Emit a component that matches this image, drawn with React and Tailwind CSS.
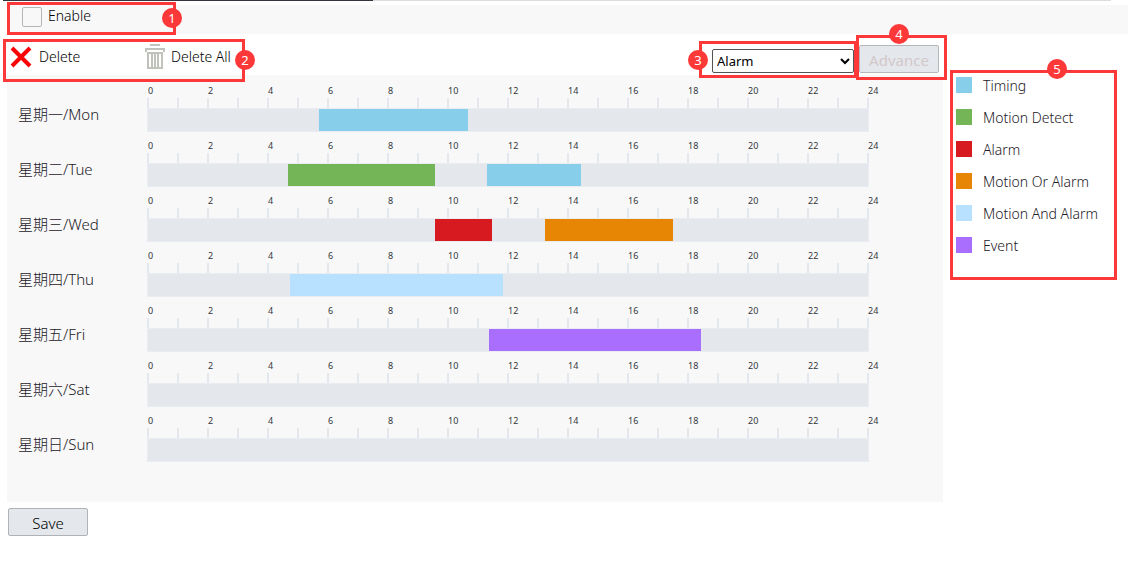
import React from "react";

const KINDS = [
  { name: "Timing", color: "bg-[#87ceeb]" },
  { name: "Motion Detect", color: "bg-[#73b557]" },
  { name: "Alarm", color: "bg-[#d71920]" },
  { name: "Motion Or Alarm", color: "bg-[#e68604]" },
  { name: "Motion And Alarm", color: "bg-[#b8e1ff]" },
  { name: "Event", color: "bg-[#aa6eff]" },
];

// Periods are [kind index, start minute, end minute].
const DAYS = [
  { label: "星期一/Mon", periods: [[0, 342, 640]] },
  { label: "星期二/Tue", periods: [[1, 280, 574], [0, 678, 866]] },
  { label: "星期三/Wed", periods: [[2, 574, 688], [3, 794, 1050]] },
  { label: "星期四/Thu", periods: [[4, 284, 710]] },
  { label: "星期五/Fri", periods: [[5, 682, 1106]] },
  { label: "星期六/Sat", periods: [] },
  { label: "星期日/Sun", periods: [] },
];

const DAY_MINUTES = 1440;
const HOURS = Array.from({ length: 25 }, (_, h) => h);
const EVEN_HOURS = HOURS.filter((h) => h % 2 === 0);

function Callout({ number, box, badge }) {
  return (
    <div className={`pointer-events-none absolute z-10 border-3 border-[#fd3838] ${box}`}>
      <span
        className={`absolute flex size-5 items-center justify-center rounded-full bg-[#fd3838] text-[13px] leading-none text-white ${badge}`}
      >
        {number}
      </span>
    </div>
  );
}

function CrossIcon() {
  return (
    <svg width="22" height="22" viewBox="0 0 22 22" aria-hidden="true">
      <path d="M2 2 20 20M20 2 2 20" stroke="#fa0505" strokeWidth="4" fill="none" />
    </svg>
  );
}

function TrashIcon() {
  return (
    <svg width="20" height="25" viewBox="0 0 20 25" fill="#c0c3bc" aria-hidden="true">
      <path d="M5 0h10v2H5zM0 4h20v4h-2V6H2v2H0z" />
      <path fillRule="evenodd" d="M2 8h16v17H2zM4 10v13h2V10zM8 10v13h1V10zM11 10v13h1V10zM14 10v13h2V10z" />
    </svg>
  );
}

function DayRow({ label, periods }) {
  return (
    <div className="flex h-[55px]">
      <div className="w-[129px] shrink-0 pt-6 text-[15px] leading-[30px] font-light text-[#1c2026]">{label}</div>
      <div className="min-w-0 flex-1">
        <div className="flex h-[23px] justify-between pt-2 pl-px text-[9px] leading-4 text-[#33373c]">
          {EVEN_HOURS.map((h) => (
            <span key={h} className="w-px whitespace-nowrap">
              {h}
            </span>
          ))}
        </div>
        <div className="flex h-[10px] justify-between">
          {HOURS.map((h) => (
            <span key={h} className="w-[2px] bg-[#e4e7ec]" />
          ))}
        </div>
        <div className="relative h-6 border border-[#e9ecf0] bg-[#e4e7ec]">
          {periods.map(([kind, start, end]) => (
            <div
              key={start}
              className={`absolute inset-y-0 ${KINDS[kind].color}`}
              style={{
                left: `${(start / DAY_MINUTES) * 100}%`,
                width: `${((end - start) / DAY_MINUTES) * 100}%`,
              }}
            />
          ))}
        </div>
      </div>
    </div>
  );
}

export default function App() {
  return (
    <div className="bg-white font-['Noto_Sans','Noto_Sans_CJK_SC',sans-serif] text-[13px] text-[#1c2026]">
      <div className="mr-6 ml-[3px] flex h-px">
        <div className="w-[370px] bg-[#34343e]" />
        <div className="flex-1 bg-[#dcdcdc]" />
      </div>

      <div className="px-[7px] pt-1">
        <div className="relative flex h-[29px] items-start bg-[#f8f8f8] pt-[2px] pl-[15px]">
          <input
            id="enable"
            type="checkbox"
            className="size-5 appearance-none rounded-[2px] border border-[#b5b5b5] bg-[#f8f8f8] checked:bg-[#87ceeb]"
          />
          <label htmlFor="enable" className="pl-[6px] text-[14px] leading-[18px] font-light text-black">
            Enable
          </label>
          <Callout number={1} box="-top-[3px] left-0 h-[33px] w-[169px]" badge="top-[3px] -right-[9px]" />
        </div>

        <div className="flex">
          <main className="min-w-0 flex-1">
            <div className="flex h-[41px] items-start justify-between">
              <div className="relative flex h-full items-center pl-[3px]">
                <button type="button" className="flex w-[135px] items-center gap-[7px] pt-1 text-[14px] font-light text-black">
                  <CrossIcon />
                  <span>Delete</span>
                </button>
                <button type="button" className="flex items-center gap-[6px] pt-1 text-[14px] font-light text-black">
                  <TrashIcon />
                  <span>Delete All</span>
                </button>
                <Callout number={2} box="top-[5px] -left-1 h-[43px] w-[242px]" badge="top-2 -right-[13px]" />
              </div>
              <div className="flex h-full items-end pr-1 pb-[2px]">
                <div className="relative mr-[5px]">
                  <select
                    aria-label="Record type"
                    defaultValue="Alarm"
                    className="block h-6 w-[142px] rounded-[2px] border border-[#555] bg-white text-[13px] text-black"
                  >
                    {KINDS.map((k) => (
                      <option key={k.name}>{k.name}</option>
                    ))}
                  </select>
                  <Callout number={3} box="-top-2 -left-[13px] h-[37px] w-[158px]" badge="top-[6px] -left-[14px]" />
                </div>
                <div className="relative">
                  <button
                    type="button"
                    disabled
                    className="block h-7 w-20 rounded-[2px] border border-[#b4b6ba] bg-[#e4e7ec] pt-[2px] text-[15px] text-[#d3c8ca]"
                  >
                    Advance
                  </button>
                  <Callout number={4} box="-top-[10px] -left-[3px] h-[45px] w-[91px]" badge="-top-[14px] left-[30px]" />
                </div>
              </div>
            </div>

            <section className="bg-[#f8f8f8] pr-[74px] pb-[42px] pl-[11px]">
              {DAYS.map((day) => (
                <DayRow key={day.label} {...day} />
              ))}
            </section>

            <button
              type="button"
              className="mt-[6px] ml-px block h-7 w-20 rounded-[2px] border border-[#b0b2b5] bg-[#e4e7ec] pt-[2px] text-[15px] font-light text-black"
            >
              Save
            </button>
          </main>

          <aside className="w-[185px] shrink-0 pt-9 pl-[7px]">
            <div className="relative h-[210px] w-[167px] pt-[7px] pl-[6px]">
              <ul className="flex flex-col gap-4">
                {KINDS.map((k) => (
                  <li key={k.name} className="flex h-4 items-center gap-[11px] text-[14px] font-light whitespace-nowrap">
                    <span className={`size-4 ${k.color}`} />
                    {k.name}
                  </li>
                ))}
              </ul>
              <Callout number={5} box="inset-0" badge="-top-[14px] left-[94px]" />
            </div>
          </aside>
        </div>
      </div>
    </div>
  );
}
